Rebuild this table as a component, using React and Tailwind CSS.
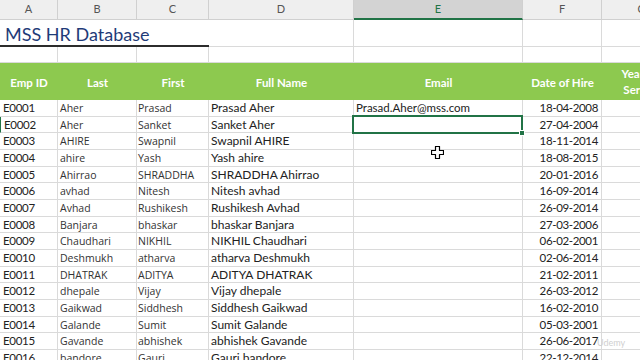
import React from 'react'

const cols = 'grid grid-cols-[58px_79px_72px_145px_169px_79px_80px]'
const cell = 'border-r border-b border-[#dadada] overflow-hidden whitespace-nowrap'

const rows = [
  ['E0001', 'Aher', 'Prasad', 'Prasad.Aher@mss.com', '18-04-2008'],
  ['E0002', 'Aher', 'Sanket', '', '27-04-2004'],
  ['E0003', 'AHIRE', 'Swapnil', '', '18-11-2014'],
  ['E0004', 'ahire', 'Yash', '', '18-08-2015'],
  ['E0005', 'Ahirrao', 'SHRADDHA', '', '20-01-2016'],
  ['E0006', 'avhad', 'Nitesh', '', '16-09-2014'],
  ['E0007', 'Avhad', 'Rushikesh', '', '26-09-2014'],
  ['E0008', 'Banjara', 'bhaskar', '', '27-03-2006'],
  ['E0009', 'Chaudhari', 'NIKHIL', '', '06-02-2001'],
  ['E0010', 'Deshmukh', 'atharva', '', '02-06-2014'],
  ['E0011', 'DHATRAK', 'ADITYA', '', '21-02-2011'],
  ['E0012', 'dhepale', 'Vijay', '', '26-03-2012'],
  ['E0013', 'Gaikwad', 'Siddhesh', '', '16-02-2010'],
  ['E0014', 'Galande', 'Sumit', '', '05-03-2001'],
  ['E0015', 'Gavande', 'abhishek', '', '26-06-2017'],
  ['E0016', 'bandore', 'Gauri', '', '22-12-2014'],
]

const letters = ['A', 'B', 'C', 'D', 'E', 'F', 'G']

function Cursor() {
  return (
    <svg className="absolute left-[431px] top-[146px]" width="13" height="13" viewBox="0 0 13 13">
      <path d="M4.5 0.5h4v4h4v4h-4v4h-4v-4h-4v-4h4z" fill="#fff" stroke="#000" strokeWidth="1.2" strokeLinejoin="round" />
    </svg>
  )
}

export default function App() {
  return (
    <div className="relative w-[640px] h-[360px] overflow-hidden bg-white font-['Lato',sans-serif]">
      <div className="w-[682px]">
        {/* column letters */}
        <div className={`${cols} h-[20px] bg-[#efefef] text-[11px] text-[#555]`}>
          {letters.map((l) => (
            <div
              key={l}
              className={`flex items-center justify-center border-r border-b border-[#d0d0d0] ${l === 'E' ? 'bg-[#d3d3d3] border-b-2 border-b-[#217346] text-[#217346]' : ''}`}
            >
              {l}
            </div>
          ))}
        </div>

        {/* title row */}
        <div className={`${cols} h-[27px]`}>
          <div className="col-span-3 flex items-end border-b-2 border-b-[#2c2c2c] pb-[2px] pl-[5px] text-[18px] leading-none text-[#1f3b78]">
            MSS HR Database
          </div>
          <div className={cell} />
          <div className={cell} />
          <div className={cell} />
          <div className={cell} />
        </div>

        {/* blank row */}
        <div className={`${cols} h-[16px]`}>
          {letters.map((l) => (
            <div key={l} className={cell} />
          ))}
        </div>

        {/* green header */}
        <div className={`${cols} h-[37px] bg-[#8dc94f] text-[11.5px] font-bold text-white`}>
          <div className="flex items-center justify-center pt-[2px]">Emp ID</div>
          <div className="flex items-center justify-center pt-[2px]">Last</div>
          <div className="flex items-center justify-center pt-[2px]">First</div>
          <div className="flex items-center justify-center pt-[2px]">Full Name</div>
          <div className="flex items-center justify-center pt-[2px]">Email</div>
          <div className="flex items-center justify-center pt-[2px]">Date of Hire</div>
          <div className="flex flex-col items-center justify-center pt-[1px] leading-[16px]">
            <span>Years of</span>
            <span>Service</span>
          </div>
        </div>

        {/* data */}
        {rows.map(([id, last, first, email, date], i) => (
          <div key={id} className={`${cols} h-[16.67px] leading-[16px]`}>
            <div className={`${cell} pl-[3px] text-[11.5px] tracking-[-0.3px] text-[#222] ${i === 1 ? 'border-l-[1.5px] border-l-[#217346]' : ''}`}>{id}</div>
            <div className={`${cell} pl-[2px] text-[10.5px] font-['Open_Sans',sans-serif] text-[#333]`}>{last}</div>
            <div className={`${cell} pl-[1px] text-[10.5px] font-['Open_Sans',sans-serif] text-[#333]`}>{first}</div>
            <div className={`${cell} pl-[2px] text-[12px] text-[#222]`}>{`${first} ${last}`}</div>
            <div className={`${cell} pl-[2px] text-[11.5px] text-[#222]`}>{email}</div>
            <div className={`${cell} pr-[3px] text-right text-[11.5px] tracking-[-0.35px] text-[#222]`}>{date}</div>
            <div className={cell} />
          </div>
        ))}
      </div>

      {/* active cell E5 */}
      <div className="absolute left-[352px] top-[115px] h-[19px] w-[171px] border-2 border-[#217346]">
        <div className="absolute right-[-4px] bottom-[-4px] h-[6px] w-[6px] border border-white bg-[#217346]" />
      </div>

      <Cursor />
      <div className="absolute left-[597px] top-[336px] text-[9px] text-[#cfcfcf]">Udemy</div>
    </div>
  )
}
